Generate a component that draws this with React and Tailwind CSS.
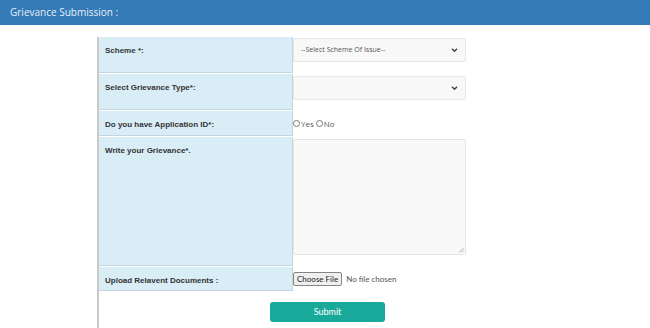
import React from "react";

const Chevron = () => (
  <svg width="7" height="5" viewBox="0 0 7 5" className="absolute right-[7px] top-1/2 -translate-y-1/2">
    <path d="M1 1.2 L3.5 3.7 L6 1.2" fill="none" stroke="#444" strokeWidth="1.5" />
  </svg>
);

const Label = ({ h, children, first }) => (
  <div
    className={`w-[194px] shrink-0 bg-[#d9edf7] border-r border-b border-[#c2d6e1] pl-[6px] pt-[8px] text-[8px] font-bold text-[#333] ${first ? "" : "mt-px"}`}
    style={{ height: h, fontFamily: '"Liberation Sans", Arial, sans-serif' }}
  >
    {children}
  </div>
);

const Radio = () => (
  <span className="inline-block w-[7px] h-[7px] rounded-full border border-[#777] bg-white" />
);

export default function App() {
  return (
    <div className="w-[650px] h-[328px] bg-white overflow-hidden" style={{ fontFamily: '"Open Sans", sans-serif' }}>
      <div className="h-[25px] bg-[#337ab7] flex items-center pl-[10px] text-[10px] text-[#e9f0f7]">
        Grievance Submission :
      </div>
      <div className="ml-[97px] mt-[12px] border-l-2 border-[#c9c9c9] h-[291px]">
        {/* Row 1 */}
        <div className="flex">
          <Label h={36} first>Scheme *:</Label>
          <div className="pt-px">
            <div className="relative w-[173px] h-[24px] bg-[#f8f8f8] border border-[#e6e6e6] rounded-[2px] flex items-center pl-[7px] text-[7px] text-[#555]">
              --Select Scheme Of Issue--
              <Chevron />
            </div>
          </div>
        </div>
        {/* Row 2 */}
        <div className="flex">
          <Label h={36}>Select Grievance Type*:</Label>
          <div className="pt-[2px] mt-px">
            <div className="relative w-[173px] h-[24px] bg-[#f8f8f8] border border-[#e6e6e6] rounded-[2px]">
              <Chevron />
            </div>
          </div>
        </div>
        {/* Row 3 */}
        <div className="flex">
          <Label h={25}>Do you have Application ID*:</Label>
          <div className="mt-px flex items-center text-[8px] text-[#555]">
            <Radio />
            <span className="ml-px">Yes</span>
            <span className="ml-[2px]"><Radio /></span>
            <span className="ml-px">No</span>
          </div>
        </div>
        {/* Row 4 */}
        <div className="flex">
          <Label h={129}>Write your Grievance*.</Label>
          <div className="pt-[2px] mt-px">
            <div className="relative w-[173px] h-[116px] bg-[#f9f9f9] border border-[#e6e6e6] rounded-[2px]">
              <svg width="6" height="6" viewBox="0 0 6 6" className="absolute right-[1px] bottom-[1px]">
                <path d="M5.5 1 L1 5.5 M5.5 3.5 L3.5 5.5" stroke="#999" strokeWidth="0.8" />
              </svg>
            </div>
          </div>
        </div>
        {/* Row 5 */}
        <div className="flex">
          <Label h={24}>Upload Relavent Documents :</Label>
          <div className="mt-px pt-[5px] flex items-start text-[8px] text-[#555]" style={{ fontFamily: '"Lato", sans-serif' }}>
            <div className="h-[14px] px-[3px] flex items-center bg-[#efefef] border border-[#858585] rounded-[2px] text-[#222]">
              Choose File
            </div>
            <span className="ml-[4px] leading-[14px]">No file chosen</span>
          </div>
        </div>
        <div className="ml-[171px] mt-[11px] w-[115px] h-[20px] bg-[#18a99b] rounded-[3px] flex items-center justify-center text-white text-[9px]" style={{ fontFamily: '"Lato", sans-serif' }}>
          Submit
        </div>
      </div>
    </div>
  );
}
